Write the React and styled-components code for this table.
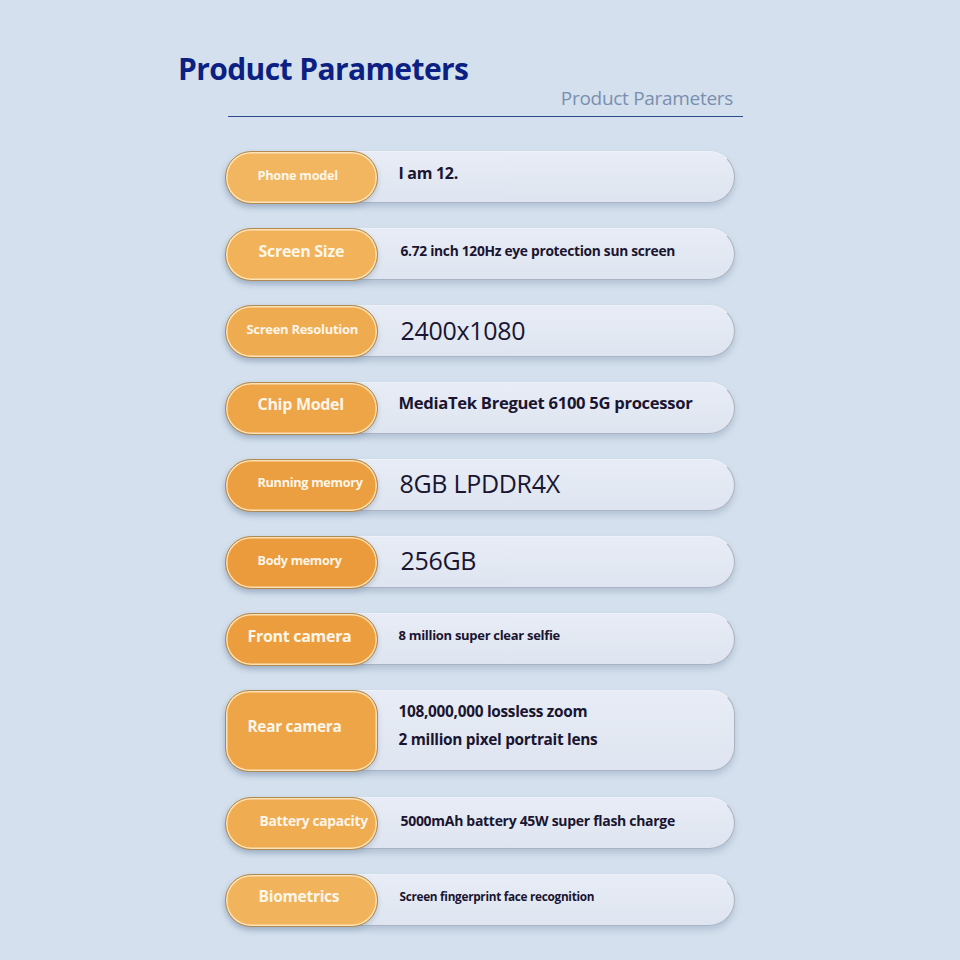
import React from 'react'
import styled, { createGlobalStyle } from 'styled-components';

const GlobalStyle = createGlobalStyle`
    body {
        margin: 0;
        background: #d4e0ed;
        font-family: "Open Sans", "Noto Sans", sans-serif;
    }
`;

const params = [
    { label: 'Phone model', labelSize: 12.8, labelTop: -4, pad: 32, tone: '#f2b660', value: ['I am 12.'], size: 16, weight: 700, top: -8 },
    { label: 'Screen Size', labelSize: 16, labelTop: -6, pad: 33, tone: '#f1b25a', value: ['6.72 inch 120Hz eye protection sun screen'], size: 13.8, weight: 700, top: -8, indent: 2 },
    { label: 'Screen Resolution', labelSize: 13, labelTop: -4, pad: 21, tone: '#efab50', value: ['2400x1080'], size: 25, weight: 400, top: -2, indent: 2 },
    { label: 'Chip Model', labelSize: 16, labelTop: -8, pad: 32, tone: '#eea548', value: ['MediaTek Breguet 6100 5G processor'], size: 16.6, weight: 700, top: -12 },
    { label: 'Running memory', labelSize: 12.7, labelTop: -6, pad: 32, tone: '#ec9f40', value: ['8GB LPDDR4X'], size: 25, weight: 400, top: -4, indent: 1 },
    { label: 'Body memory', labelSize: 12.6, labelTop: -4, pad: 32, tone: '#eb9b3b', value: ['256GB'], size: 25, weight: 400, top: -4, indent: 2 },
    { label: 'Front camera', labelSize: 16, labelTop: -6, pad: 22, tone: '#ec9e3e', value: ['8 million super clear selfie'], size: 13, weight: 700, top: -8 },
    { label: 'Rear camera', labelSize: 15.4, labelTop: -9, pad: 22, tone: '#eda547', value: ['108,000,000 lossless zoom', '2 million pixel portrait lens'], size: 15.4, weight: 700, top: -10, tall: true },
    { label: 'Battery capacity', labelSize: 13.8, labelTop: -6, pad: 34, tone: '#efac51', value: ['5000mAh battery 45W super flash charge'], size: 14, weight: 700, top: -6, indent: 2 },
    { label: 'Biometrics', labelSize: 15.6, labelTop: -8, pad: 33, tone: '#f1b35b', value: ['Screen fingerprint face recognition'], size: 11.8, weight: 700, top: -8, indent: 1 },
];

function ProductParameters() {
    return (
        <Page>
            <GlobalStyle />
            <Title>Product Parameters</Title>
            <SubHeader>
                <SubTitle>Product Parameters</SubTitle>
            </SubHeader>
            <List>
                {params.map((p) => (
                    <Card key={p.label} $tall={p.tall}>
                        <Pill $tone={p.tone} $pad={p.pad}>
                            <PillText $size={p.labelSize} $top={p.labelTop}>{p.label}</PillText>
                        </Pill>
                        <Value $size={p.size} $weight={p.weight} $top={p.top || 0} $indent={p.indent || 0}>
                            {p.value.map((line) => (
                                <ValueLine key={line}>{line}</ValueLine>
                            ))}
                        </Value>
                    </Card>
                ))}
            </List>
        </Page>
    )
}

const Page = styled.div`
    width: 960px;
    min-height: 960px;
    background: #d4e0ed;
    padding-top: 50px;
    box-sizing: border-box;
`;
const Title = styled.h1`
    margin: 0 0 0 178px;
    font-size: 30px;
    font-weight: 700;
    letter-spacing: -0.6px;
    color: #0c1f82;
    line-height: 38px;
`;
const SubHeader = styled.div`
    margin-left: 228px;
    width: 515px;
    border-bottom: 1.5px solid #2c4a8c;
    display: flex;
    justify-content: flex-end;
    padding: 0 10px 8px 0;
    box-sizing: border-box;
`;
const SubTitle = styled.span`
    font-size: 19px;
    color: #7a8fae;
    line-height: 20px;
    letter-spacing: -0.3px;
`;
const List = styled.div`
    margin: 34px 0 0 225px;
    width: 510px;
    display: flex;
    flex-direction: column;
    gap: 25px;
`;
const Card = styled.div`
    height: ${(p) => (p.$tall ? '81px' : '52px')};
    margin-bottom: ${(p) => (p.$tall ? '1px' : '0')};
    display: flex;
    align-items: center;
    border-radius: ${(p) => (p.$tall ? '24px' : '26px')};
    background: linear-gradient(180deg, #e7ecf6 0%, #dfe5f0 100%);
    border: 1.5px solid #eef2f8;
    border-right-color: #a9b3c3;
    border-bottom-color: #a9b3c3;
    box-shadow: 0 4px 6px rgba(120, 140, 170, 0.35);
    box-sizing: border-box;
`;
const Pill = styled.div`
    width: 153px;
    height: calc(100% + 3px);
    margin: -1.5px 0 -1.5px -1.5px;
    flex-shrink: 0;
    display: flex;
    align-items: center;
    padding-left: ${(p) => p.$pad}px;
    box-sizing: border-box;
    border-radius: inherit;
    background: ${(p) => p.$tone};
    border: 1.5px solid #b08a50;
    box-shadow: inset 0 0 0 1.5px rgba(255, 240, 210, 0.8), 0 3px 5px rgba(120, 140, 170, 0.35);
`;
const PillText = styled.span`
    margin-top: ${(p) => p.$top}px;
    font-size: ${(p) => p.$size}px;
    font-weight: 700;
    color: #fdf6ea;
    letter-spacing: -0.3px;
    white-space: nowrap;
`;
const Value = styled.div`
    margin-left: ${(p) => 21 + p.$indent}px;
    margin-top: ${(p) => p.$top}px;
    font-size: ${(p) => p.$size}px;
    font-weight: ${(p) => p.$weight};
    color: #1a1530;
    letter-spacing: -0.3px;
    display: flex;
    flex-direction: column;
    gap: 7px;
`;
const ValueLine = styled.span`
    white-space: nowrap;
`;

export default ProductParameters
